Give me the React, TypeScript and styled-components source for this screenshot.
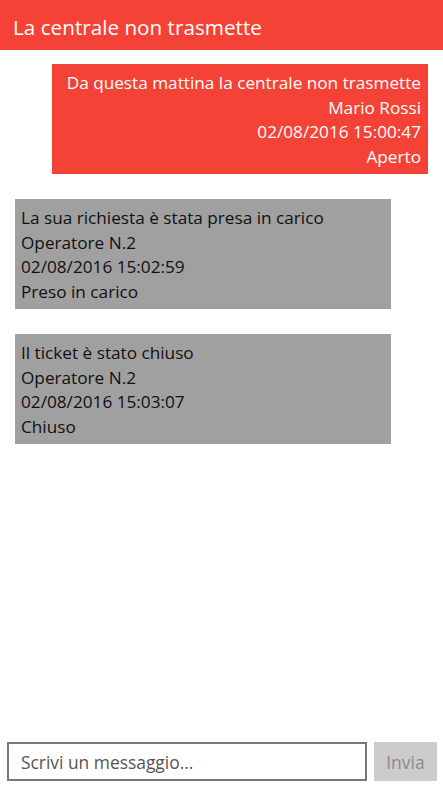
import React from "react";
import styled, { createGlobalStyle } from "styled-components";

const GlobalStyle = createGlobalStyle`
  html, body, #root {
    margin: 0;
    padding: 0;
    height: 100%;
  }
  body {
    background: #ffffff;
    font-family: "Open Sans", "Noto Sans", sans-serif;
  }
`;

const Page = styled.div`
  display: flex;
  flex-direction: column;
  height: 100vh;
  background: #ffffff;
`;

const Header = styled.header`
  height: 50px;
  box-sizing: border-box;
  flex-shrink: 0;
  background: #f44336;
  color: #ffffff;
  display: flex;
  align-items: center;
  padding: 3px 0 0 13px;
  font-size: 20.7px;
`;

const Messages = styled.div`
  flex: 1;
  display: flex;
  flex-direction: column;
  gap: 25px;
  padding: 14px 15px 0 15px;
  overflow: hidden;
`;

const Bubble = styled.div<{ $mine?: boolean }>`
  width: 376px;
  box-sizing: border-box;
  padding: 7px 7px 5px 6px;
  align-self: ${(p) => (p.$mine ? "flex-end" : "flex-start")};
  text-align: ${(p) => (p.$mine ? "right" : "left")};
  background: ${(p) => (p.$mine ? "#f44336" : "#a0a0a0")};
  color: ${(p) => (p.$mine ? "#ffffff" : "#111111")};
  font-size: 17.2px;
  line-height: 24.5px;
`;

const Line = styled.div`
  white-space: nowrap;
`;

const Composer = styled.form`
  display: flex;
  gap: 7px;
  padding: 0 6px 6px 7px;
  align-items: stretch;
`;

const Input = styled.input`
  flex: 1;
  height: 39px;
  box-sizing: border-box;
  border: 2px solid #787878;
  padding: 0 12px;
  font-family: inherit;
  font-size: 17.4px;
  color: #333333;
  outline: none;
  &::placeholder {
    color: #555555;
  }
`;

const SendButton = styled.button`
  width: 63px;
  height: 39px;
  border: none;
  background: #cccccc;
  color: #8a8a8a;
  font-family: inherit;
  font-size: 17.5px;
  padding: 0;
`;

type Msg = { lines: string[]; mine?: boolean };

const messages: Msg[] = [
  {
    mine: true,
    lines: [
      "Da questa mattina la centrale non trasmette",
      "Mario Rossi",
      "02/08/2016 15:00:47",
      "Aperto",
    ],
  },
  {
    lines: [
      "La sua richiesta è stata presa in carico",
      "Operatore N.2",
      "02/08/2016 15:02:59",
      "Preso in carico",
    ],
  },
  {
    lines: [
      "Il ticket è stato chiuso",
      "Operatore N.2",
      "02/08/2016 15:03:07",
      "Chiuso",
    ],
  },
];

const App: React.FC = () => {
  return (
    <>
      <GlobalStyle />
      <Page>
        <Header>La centrale non trasmette</Header>
        <Messages>
          {messages.map((m, i) => (
            <Bubble key={i} $mine={m.mine}>
              {m.lines.map((l, j) => (
                <Line key={j}>{l}</Line>
              ))}
            </Bubble>
          ))}
        </Messages>
        <Composer onSubmit={(e) => e.preventDefault()}>
          <Input placeholder="Scrivi un messaggio..." />
          <SendButton type="submit">Invia</SendButton>
        </Composer>
      </Page>
    </>
  );
};

export default App;
